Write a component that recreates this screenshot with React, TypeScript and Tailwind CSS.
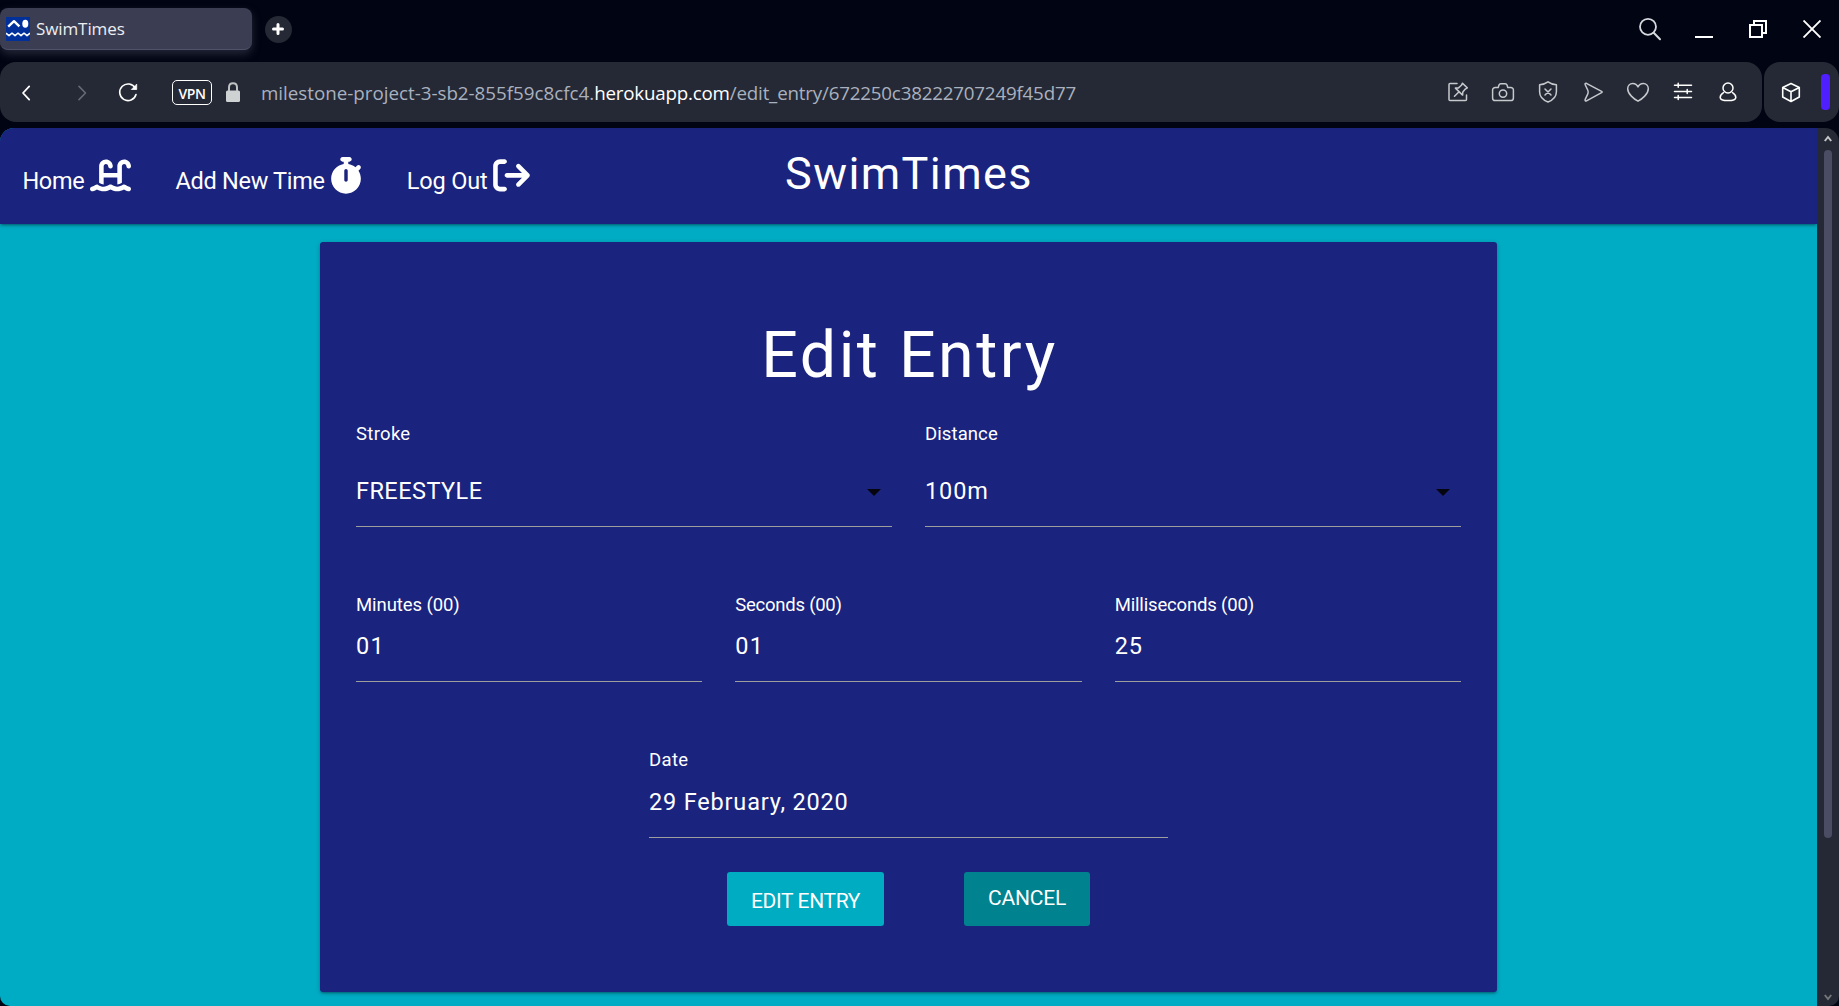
import React from "react";
import { FaWaterLadder, FaStopwatch, FaArrowRightFromBracket } from "react-icons/fa6";

type IconProps = { children: React.ReactNode; className?: string; size?: number };

function Icon({ children, className = "text-[#cfd2d6]", size = 24 }: IconProps) {
  return (
    <svg
      width={size}
      height={size}
      viewBox={`0 0 ${size} ${size}`}
      fill="none"
      stroke="currentColor"
      strokeWidth="1.5"
      strokeLinecap="round"
      strokeLinejoin="round"
      className={`shrink-0 ${className}`}
    >
      {children}
    </svg>
  );
}

function Favicon() {
  return (
    <svg width="24" height="24" viewBox="0 0 24 24" fill="none" className="shrink-0">
      <rect width="24" height="24" fill="#02309b" />
      <path d="M2.2 9.6 8 4.2 13.4 9.4" stroke="#fff" strokeWidth="2.4" strokeLinejoin="round" />
      <ellipse cx="19.3" cy="6.7" rx="3" ry="4" fill="#fff" />
      <path d="M0 16.2 3 18.7 6 16.2 9 18.7 12 16.2 15 18.7 18 16.2 21 18.7 24 16.2" stroke="#fff" strokeWidth="1.5" strokeLinejoin="round" />
    </svg>
  );
}

function TitleBar() {
  return (
    <header className="flex h-[62px] shrink-0 items-start">
      <div className="mt-2 flex h-[42px] w-[252px] items-center rounded-lg border-b border-[#4f5268] bg-[#3b3e53] pl-[6px] shadow-[0_4px_10px_rgba(90,92,115,0.4)]">
        <Favicon />
        <span className="ml-[6px] text-[17px] leading-6 tracking-[-0.1px] text-[#eceef2]">SwimTimes</span>
      </div>
      <div className="mt-[15.5px] ml-[12.5px] flex h-[27px] w-[27px] items-center justify-center rounded-full bg-[#252935]">
        <svg width="12" height="12" viewBox="0 0 12 12" stroke="#fff" strokeWidth="3" strokeLinecap="round">
          <path d="M6 1.5v9M1.5 6h9" />
        </svg>
      </div>
      <div className="mt-[17px] ml-auto flex h-6 items-center pr-[18px] text-[#eceef2]">
        <Icon className="text-[#d5d8dc]">
          <circle cx="10" cy="9.8" r="8" strokeWidth="1.8" />
          <path d="m15.7 15.8 6.3 6.4" strokeWidth="2" />
        </Icon>
        <svg width="18" height="18" viewBox="0 0 18 18" className="ml-[33px]">
          <path d="M0 17h18" stroke="#fff" strokeWidth="2" />
        </svg>
        <svg width="18" height="18" viewBox="0 0 18 18" fill="none" stroke="#fff" strokeWidth="2" className="mx-9">
          <path d="M1 5h12v12H1zM5 5V1h12v12h-4" />
        </svg>
        <svg width="18" height="18" viewBox="0 0 18 18" stroke="#fff" strokeWidth="1.9">
          <path d="m.5.5 17 17m0-17-17 17" />
        </svg>
      </div>
    </header>
  );
}

const toolbarIcons: { name: string; bright?: boolean; art: React.ReactNode }[] = [
  {
    name: "pin",
    art: (
      <>
        <path d="M11 3.5H4A1 1 0 0 0 3 4.5v15a1 1 0 0 0 1 1h15.5a1 1 0 0 0 1-1V15" />
        <path d="m16.5 3.2 4.8 4.7-2 1.2-2.5 2.9-.2 3.1-7.2-7 3.1-.2 2.9-2.6zM12.8 12l-4.3 4.2" />
      </>
    ),
  },
  {
    name: "camera",
    art: (
      <>
        <path d="M4.2 7.4h3l.8-2.3A2 2 0 0 1 9.8 3.8h4.4A2 2 0 0 1 16 5.1l.8 2.3h3a2.6 2.6 0 0 1 2.6 2.6v8a2.6 2.6 0 0 1-2.6 2.6H4.2A2.6 2.6 0 0 1 1.6 18v-8a2.6 2.6 0 0 1 2.6-2.6z" />
        <circle cx="12" cy="13.6" r="3.7" />
      </>
    ),
  },
  {
    name: "shield",
    art: (
      <>
        <path d="M12 1.8c2.4 1.8 5 2.6 8.4 2.9v7c0 5-3.2 8.2-8.4 10.3-5.2-2.1-8.4-5.3-8.4-10.3v-7C7 4.4 9.6 3.6 12 1.8z" />
        <path d="m9 9 6 6m0-6-6 6" />
      </>
    ),
  },
  {
    name: "send",
    art: <path d="M4.2 4.7c-.5-1 .2-1.8 1.2-1.4L20.6 11.4c.7.4.7.9 0 1.3L5.5 20.8c-1 .5-1.8-.4-1.3-1.4l2.6-5.5c.6-1.3.6-2.3 0-3.6z" />,
  },
  {
    name: "heart",
    art: <path d="M12 21.2C8 19 1.7 14 1.7 8.7c0-3 2.2-5.3 5-5.3 2.3 0 4.3 1.3 5.3 3.5 1-2.2 3-3.5 5.3-3.5 2.8 0 5 2.3 5 5.3C22.3 14 16 19 12 21.2z" />,
  },
  {
    name: "sliders",
    bright: true,
    art: <path d="M3.5 5.3h17M3.5 11.5h17M3.5 17.6h17M7.2 3.3v4M16.2 9.5v4M7.2 15.6v4" />,
  },
  {
    name: "profile",
    bright: true,
    art: (
      <>
        <circle cx="12" cy="8" r="5" />
        <path d="M7.5 12.7c-2 1.2-3.3 2.7-3.3 4.7 0 2.5 3 3.2 7.8 3.2s7.8-.7 7.8-3.2c0-2-1.3-3.5-3.3-4.7" />
      </>
    ),
  },
];

function Toolbar() {
  return (
    <div className="flex h-[66px] shrink-0 items-start">
      <div className="flex h-[60px] w-[1762px] items-center rounded-[16px] bg-[#252935]">
        <div className="flex w-[51px] justify-center">
          <Icon className="text-white">
            <path d="M15.2 6.4 9 13l6.2 6.6" strokeWidth="1.8" />
          </Icon>
        </div>
        <div className="flex w-[62px] justify-center">
          <Icon className="text-[#666975]">
            <path d="m9 6.4 6.5 6.6L9 19.6" strokeWidth="1.6" />
          </Icon>
        </div>
        <div className="flex w-[30px] justify-center">
          <Icon className="text-white">
            <path d="M19.3 8.3A8.3 8.3 0 1 0 20 14.5" strokeWidth="1.6" />
            <path d="M20.7 4.5v5h-5z" fill="currentColor" strokeWidth="0.8" />
          </Icon>
        </div>
        <div className="ml-[29px] flex h-[25px] w-10 items-center justify-center rounded-[5px] border border-white pt-[3px] text-[14px] font-semibold tracking-[-0.4px] text-white">
          VPN
        </div>
        <svg width="14" height="20" viewBox="0 0 14 20" fill="none" className="ml-[14px]">
          <rect y="8.5" width="14" height="11.5" rx="1.5" fill="#cfd2d2" />
          <path d="M3 9V5.5C3 3 4.5 1.2 7 1.2S11 3 11 5.5V9" stroke="#bfc3c4" strokeWidth="2" />
        </svg>
        <div className="ml-[21px] pt-[2px] text-[18.75px] leading-7 whitespace-pre text-[#a9b1bf]">
          <span>milestone-project-3-sb2-855f59c8cfc4.</span>
          <span className="tracking-[-0.2px] text-white">herokuapp.com</span>
          <span className="tracking-[-0.19px]">/edit_entry/672250c38222707249f45d77</span>
        </div>
        <div className="ml-auto flex pr-3">
          {toolbarIcons.map((icon) => (
            <span key={icon.name} className="flex w-[45px] justify-center">
              <Icon className={icon.bright ? "text-white" : "text-[#c6c9cc]"}>{icon.art}</Icon>
            </span>
          ))}
        </div>
      </div>
      <div className="ml-[2px] flex h-[60px] flex-1 items-center rounded-[16px] bg-[#252935] pl-[15px]">
        <Icon className="text-white">
          <path d="m12 3.5 8.3 4v9.500L12 21.5 3.7 17V7.5zM3.7 7.5l8.3 4.2 8.3-4.2M12 11.7v9.8" strokeWidth="1.6" />
        </Icon>
        <div className="ml-[18px] h-9 w-[9px] rounded-[4px] bg-[#4f1fff]" />
      </div>
    </div>
  );
}

const navItems = [
  { label: "Home", width: "w-[67.6px]", tracking: "tracking-[-0.3px]", icon: <FaWaterLadder className="h-[36.7px] w-[41px]" /> },
  { label: "Add New Time", width: "w-[154.6px]", tracking: "tracking-[-0.3px]", icon: <FaStopwatch className="h-[36.7px] w-[32px]" /> },
  { label: "Log Out", width: "w-[86.2px]", tracking: "tracking-[-0.15px]", icon: <FaArrowRightFromBracket className="h-[36.7px] w-[37px]" /> },
];

function NavBar() {
  return (
    <nav className="z-10 grid h-24 shrink-0 grid-cols-[1fr_auto_1fr] items-center bg-[#1a237e] text-white shadow-[0_2px_2px_0_rgba(0,0,0,0.14),0_3px_1px_-2px_rgba(0,0,0,0.12),0_1px_5px_0_rgba(0,0,0,0.2)]">
      <ul className="flex items-center gap-[44.6px] pb-px pl-[22.4px]">
        {navItems.map((item) => (
          <li key={item.label} className="flex items-center">
            <span className={`${item.width} ${item.tracking} pt-[11px] text-[23.5px] leading-7 whitespace-nowrap`}>{item.label}</span>
            {item.icon}
          </li>
        ))}
      </ul>
      <span className="pb-[4.5px] pl-px text-[45px] leading-[54px] tracking-[1.4px]">SwimTimes</span>
    </nav>
  );
}

type FieldProps = { label: string; value: string; labelTracking?: string; tracking?: string; select?: boolean; className?: string };

function Field({ label, value, labelTracking = "", tracking = "", select, className = "flex-1" }: FieldProps) {
  return (
    <label className={`flex flex-col ${className}`}>
      <span className={`text-[18.5px] leading-6 ${labelTracking}`}>{label}</span>
      <span
        className={`flex items-center justify-between border-b border-[#9e9e9e] text-[23.5px] ${
          select ? "mt-[10.3px] h-[71px] pt-[2px] pr-[11px]" : "h-[65.3px] pb-[3.7px]"
        }`}
      >
        <span className={tracking}>{value}</span>
        {select && (
          <svg width="14" height="7" viewBox="0 0 14 7" className="mt-[2px]">
            <path d="M0 0h14L7 7z" fill="#050510" />
          </svg>
        )}
      </span>
    </label>
  );
}

function EntryCard() {
  return (
    <main className="mx-auto mt-[18px] h-[750px] w-[1177px] rounded-[3px] bg-[#1a237e] px-9 pt-[72.6px] text-white shadow-[0_2px_2px_0_rgba(0,0,0,0.14),0_3px_1px_-2px_rgba(0,0,0,0.12),0_1px_5px_0_rgba(0,0,0,0.2)]">
      <h1 className="pl-0.5 text-center text-[64.5px] leading-[80px] tracking-[2.5px]">Edit Entry</h1>
      <div className="mt-[27.1px] flex gap-[33px]">
        <Field select label="Stroke" value="FREESTYLE" labelTracking="tracking-[0.3px]" tracking="tracking-[0.45px]" />
        <Field select label="Distance" value="100m" labelTracking="tracking-[0.1px]" tracking="tracking-[0.9px]" />
      </div>
      <div className="mt-[65.7px] flex gap-[33px]">
        <Field label="Minutes (00)" value="01" labelTracking="tracking-[-0.08px]" tracking="tracking-[1.2px]" />
        <Field label="Seconds (00)" value="01" labelTracking="tracking-[-0.25px]" tracking="tracking-[1.2px]" />
        <Field label="Milliseconds (00)" value="25" labelTracking="tracking-[-0.16px]" tracking="tracking-[1px]" />
      </div>
      <div className="mt-[66.3px] flex justify-center">
        <Field label="Date" value="29 February, 2020" labelTracking="tracking-[0.35px]" tracking="tracking-[0.82px]" className="w-[519px]" />
      </div>
      <div className="mt-[34.3px] flex justify-center gap-20">
        <button className="h-[54px] w-[157px] rounded-[3px] bg-[#00acc1] pt-[5px] text-[21px] tracking-[-0.38px]">EDIT ENTRY</button>
        <button className="h-[54px] w-[126px] rounded-[3px] bg-[#00838f] pb-px text-[21px] tracking-[-0.2px]">CANCEL</button>
      </div>
    </main>
  );
}

function ScrollBar() {
  return (
    <div className="flex w-[22px] shrink-0 flex-col items-center rounded-tr-[14px] rounded-br-[10px] bg-[#252935]">
      <svg width="8" height="8" viewBox="0 0 8 8" fill="none" stroke="#c4c6c9" strokeWidth="2" className="mt-[7px]">
        <path d="M.8 6 4 2l3.2 4" />
      </svg>
      <div className="mt-[7px] h-[688px] w-2 rounded bg-[#4a4d63]" />
      <svg width="8" height="8" viewBox="0 0 8 8" fill="none" stroke="#74767a" strokeWidth="2" className="mt-auto mb-[5px]">
        <path d="M.8 2 4 6l3.2-4" />
      </svg>
    </div>
  );
}

export default function App() {
  return (
    <div className="flex h-[1006px] w-[1839px] flex-col overflow-hidden bg-[#010412] font-['Open_Sans',sans-serif]">
      <TitleBar />
      <Toolbar />
      <div className="flex min-h-0 flex-1">
        <div className="flex w-[1817px] flex-col overflow-hidden rounded-tl-[14px] rounded-bl-[10px] bg-[#00acc4] font-[Roboto,sans-serif]">
          <NavBar />
          <EntryCard />
        </div>
        <ScrollBar />
      </div>
    </div>
  );
}
